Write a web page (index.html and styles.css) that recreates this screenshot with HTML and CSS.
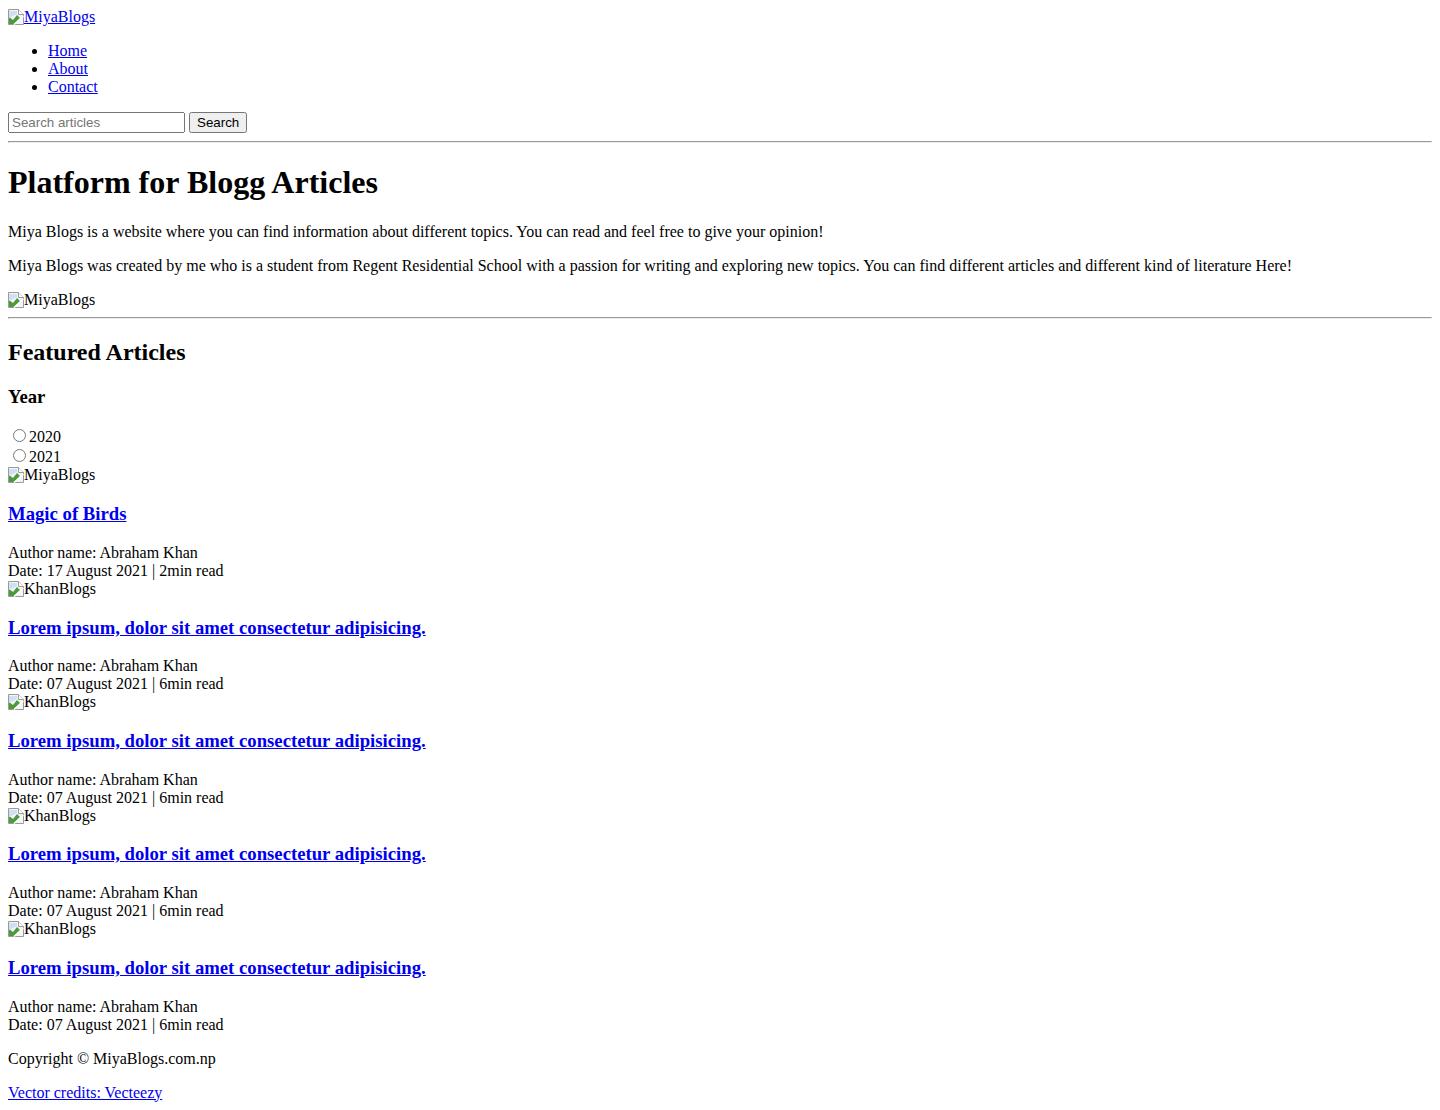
FILE: index.html
```html
<!DOCTYPE html>
<html lang="en">
<head>
<meta charset="utf-8">
<title>MiyaBlogs</title>
<link rel="stylesheet" href="styles.css">
</head>
<body>
<header>
  <a href="#" class="logo-link"><span class="broken"><svg class="broken-icon" width="16" height="16" viewBox="0 0 16 16"><path d="M0.5 0.5H10.5L15.5 5.5V15.5H0.5Z" fill="#f2f6fa" stroke="#9a9a9a"/><path d="M10.5 0.5V5.5H15.5" fill="#fff" stroke="#9a9a9a"/><path d="M1 15V8L5 11L9 6L12 9L6 15Z" fill="#4d9a3a"/><path d="M1 2H9V5L1 9Z" fill="#cfe0f2"/><path d="M6 15.5L15.5 7" stroke="#fff" stroke-width="1.5"/></svg>MiyaBlogs</span></a>
  <nav>
    <ul>
      <li><a href="#">Home</a></li>
      <li><a href="#">About</a></li>
      <li><a href="#">Contact</a></li>
    </ul>
  </nav>
  <form class="search">
    <input type="text" placeholder="Search articles">
    <button type="submit">Search</button>
  </form>
</header>
<hr>
<section class="intro">
  <h1>Platform for Blogg Articles</h1>
  <p>Miya Blogs is a website where you can find information about different topics. You can read and feel free to give your opinion!</p>
  <p>Miya Blogs was created by me who is a student from Regent Residential School with a passion for writing and exploring new topics. You can find different articles and different kind of literature Here!</p>
  <div class="pic"><span class="broken"><svg class="broken-icon" width="16" height="16" viewBox="0 0 16 16"><path d="M0.5 0.5H10.5L15.5 5.5V15.5H0.5Z" fill="#f2f6fa" stroke="#9a9a9a"/><path d="M10.5 0.5V5.5H15.5" fill="#fff" stroke="#9a9a9a"/><path d="M1 15V8L5 11L9 6L12 9L6 15Z" fill="#4d9a3a"/><path d="M1 2H9V5L1 9Z" fill="#cfe0f2"/><path d="M6 15.5L15.5 7" stroke="#fff" stroke-width="1.5"/></svg>MiyaBlogs</span></div>
</section>
<hr>
<section class="featured">
  <h2>Featured Articles</h2>
  <h3>Year</h3>
  <div class="year"><input type="radio" name="year" id="y2020"><label for="y2020">2020</label></div>
  <div class="year"><input type="radio" name="year" id="y2021"><label for="y2021">2021</label></div>

  <div class="article">
    <div class="pic"><span class="broken"><svg class="broken-icon" width="16" height="16" viewBox="0 0 16 16"><path d="M0.5 0.5H10.5L15.5 5.5V15.5H0.5Z" fill="#f2f6fa" stroke="#9a9a9a"/><path d="M10.5 0.5V5.5H15.5" fill="#fff" stroke="#9a9a9a"/><path d="M1 15V8L5 11L9 6L12 9L6 15Z" fill="#4d9a3a"/><path d="M1 2H9V5L1 9Z" fill="#cfe0f2"/><path d="M6 15.5L15.5 7" stroke="#fff" stroke-width="1.5"/></svg>MiyaBlogs</span></div>
    <h3><a href="#">Magic of Birds</a></h3>
    <div>Author name: Abraham Khan</div>
    <div>Date: 17 August 2021 | 2min read</div>
  </div>

  <div class="article">
    <div class="pic"><span class="broken"><svg class="broken-icon" width="16" height="16" viewBox="0 0 16 16"><path d="M0.5 0.5H10.5L15.5 5.5V15.5H0.5Z" fill="#f2f6fa" stroke="#9a9a9a"/><path d="M10.5 0.5V5.5H15.5" fill="#fff" stroke="#9a9a9a"/><path d="M1 15V8L5 11L9 6L12 9L6 15Z" fill="#4d9a3a"/><path d="M1 2H9V5L1 9Z" fill="#cfe0f2"/><path d="M6 15.5L15.5 7" stroke="#fff" stroke-width="1.5"/></svg>KhanBlogs</span></div>
    <h3><a href="#">Lorem ipsum, dolor sit amet consectetur adipisicing.</a></h3>
    <div>Author name: Abraham Khan</div>
    <div>Date: 07 August 2021 | 6min read</div>
  </div>

  <div class="article">
    <div class="pic"><span class="broken"><svg class="broken-icon" width="16" height="16" viewBox="0 0 16 16"><path d="M0.5 0.5H10.5L15.5 5.5V15.5H0.5Z" fill="#f2f6fa" stroke="#9a9a9a"/><path d="M10.5 0.5V5.5H15.5" fill="#fff" stroke="#9a9a9a"/><path d="M1 15V8L5 11L9 6L12 9L6 15Z" fill="#4d9a3a"/><path d="M1 2H9V5L1 9Z" fill="#cfe0f2"/><path d="M6 15.5L15.5 7" stroke="#fff" stroke-width="1.5"/></svg>KhanBlogs</span></div>
    <h3><a href="#">Lorem ipsum, dolor sit amet consectetur adipisicing.</a></h3>
    <div>Author name: Abraham Khan</div>
    <div>Date: 07 August 2021 | 6min read</div>
  </div>

  <div class="article">
    <div class="pic"><span class="broken"><svg class="broken-icon" width="16" height="16" viewBox="0 0 16 16"><path d="M0.5 0.5H10.5L15.5 5.5V15.5H0.5Z" fill="#f2f6fa" stroke="#9a9a9a"/><path d="M10.5 0.5V5.5H15.5" fill="#fff" stroke="#9a9a9a"/><path d="M1 15V8L5 11L9 6L12 9L6 15Z" fill="#4d9a3a"/><path d="M1 2H9V5L1 9Z" fill="#cfe0f2"/><path d="M6 15.5L15.5 7" stroke="#fff" stroke-width="1.5"/></svg>KhanBlogs</span></div>
    <h3><a href="#">Lorem ipsum, dolor sit amet consectetur adipisicing.</a></h3>
    <div>Author name: Abraham Khan</div>
    <div>Date: 07 August 2021 | 6min read</div>
  </div>

  <div class="article">
    <div class="pic"><span class="broken"><svg class="broken-icon" width="16" height="16" viewBox="0 0 16 16"><path d="M0.5 0.5H10.5L15.5 5.5V15.5H0.5Z" fill="#f2f6fa" stroke="#9a9a9a"/><path d="M10.5 0.5V5.5H15.5" fill="#fff" stroke="#9a9a9a"/><path d="M1 15V8L5 11L9 6L12 9L6 15Z" fill="#4d9a3a"/><path d="M1 2H9V5L1 9Z" fill="#cfe0f2"/><path d="M6 15.5L15.5 7" stroke="#fff" stroke-width="1.5"/></svg>KhanBlogs</span></div>
    <h3><a href="#">Lorem ipsum, dolor sit amet consectetur adipisicing.</a></h3>
    <div>Author name: Abraham Khan</div>
    <div>Date: 07 August 2021 | 6min read</div>
  </div>
</section>
<footer>
  <p>Copyright © MiyaBlogs.com.np</p>
  <p><a href="#">Vector credits: Vecteezy</a></p>
</footer>
</body>
</html>
```

FILE: styles.css
```css
body {
  font-family: "Liberation Serif", "Times New Roman", serif;
  font-size: 16px;
  color: #000;
  background: #fff;
}
a { color: #0000ee; }
.broken { display: inline; }
.broken-icon { vertical-align: -3px; }
.search input {
  box-sizing: border-box;
  width: 177px;
  font-family: "Liberation Sans", Arial, sans-serif;
  font-size: 13.333px;
}
.search button {
  font-family: "Liberation Sans", Arial, sans-serif;
  font-size: 13.333px;
}
.article h3 { margin: 18.72px 0; }
```
